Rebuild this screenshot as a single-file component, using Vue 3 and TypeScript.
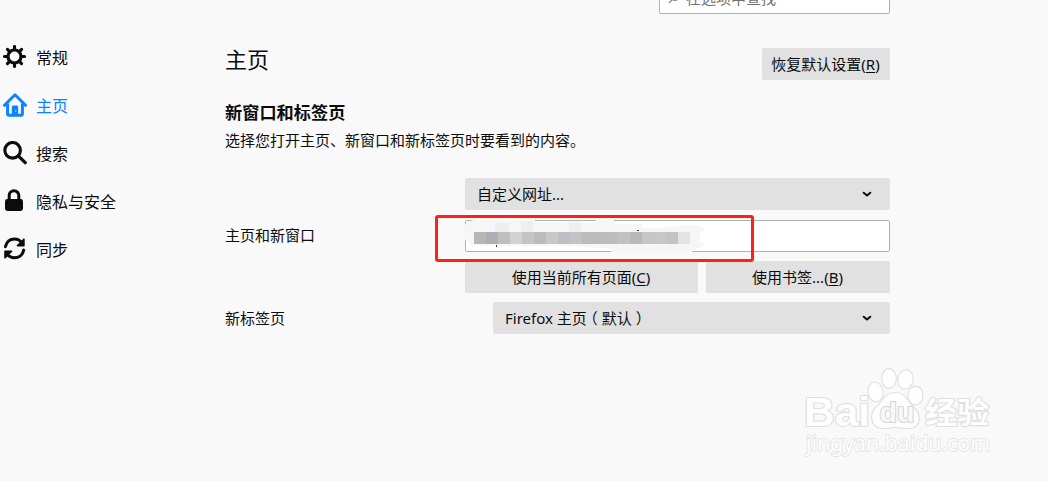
<script setup lang="ts">
interface NavItem {
  id: string
  label: string
}

const navItems: NavItem[] = [
  { id: 'general', label: '常规' },
  { id: 'home', label: '主页' },
  { id: 'search', label: '搜索' },
  { id: 'privacy', label: '隐私与安全' },
  { id: 'sync', label: '同步' },
]
const active = 'home'

const mosaic: string[] = [
  '#b9b7b4', '#abb0b6', '#bfbfc1', '#d2d2d3', '#c4c4c5', '#b9bbbe',
  '#c9c8c3', '#bcc0c4', '#c2c3c6', '#bcbcbd', '#b9bcbd', '#bdbdbf',
  '#c1c1c3', '#b9b8b9', '#c6c6c5', '#c6c7cb', '#c3c3c4', '#e2e3e6',
]
const teeth: number[] = [0, 45, 90, 135, 180, 225, 270, 315]
</script>

<template>
  <div class="page">
    <nav class="nav">
      <a v-for="item in navItems" :key="item.id" class="nav-item" :class="{ active: item.id === active }">
        <svg class="nav-icon" viewBox="0 0 24 24">
          <g v-if="item.id === 'general'" fill="none" stroke="currentColor" stroke-linecap="round">
            <circle cx="11.500" cy="11.500" r="6.500" stroke-width="3.2" />
            <path v-for="a in teeth" :key="a" d="M11.500 4V1.500" stroke-width="3.100" :transform="`rotate(${a} 11.500 11.500)`" />
          </g>
          <g v-else-if="item.id === 'home'" fill="none" stroke="currentColor" stroke-linecap="round" stroke-linejoin="round">
            <path d="M1.5 12.3L12 1.8L22.5 12.3" stroke-width="3" />
            <path d="M4.6 11.5V20.8Q4.6 22.2 6 22.2H18Q19.400 22.2 19.400 20.8V11.5" stroke-width="3" />
            <path d="M8.800 22V14Q8.800 12.500 10.2 12.500H13.8Q15.200 12.500 15.200 14V22Z" fill="currentColor" stroke="none" />
            <path d="M12.7 17.3V18.5" stroke="#8cc5ff" stroke-width="1.2" />
          </g>
          <g v-else-if="item.id === 'search'" fill="none" stroke="currentColor" stroke-linecap="round">
            <circle cx="9.6" cy="9.3" r="7.8" stroke-width="3.1" />
            <path d="M15.3 14.8L22.2 21.7" stroke-width="3.3" />
          </g>
          <g v-else-if="item.id === 'privacy'">
            <rect x="2" y="10" width="18" height="12" rx="2.4" fill="currentColor" />
            <path d="M6.2 12V6.500A4.8 4.8 0 0 1 15.8 6.500V12" fill="none" stroke="currentColor" stroke-width="3" />
          </g>
          <g v-else fill="none" stroke="currentColor" stroke-width="3" stroke-linecap="round">
            <path d="M2.4 9.7C3.6 4.9 7.2 2.1 11.5 2.1C14.7 2.1 17.4 3.7 18.9 6.2" />
            <path d="M20.7 13.1C19.6 17.9 15.9 20.8 11.6 20.8C8.3 20.8 5.6 19.2 4.1 16.7" />
            <path d="M20.9 2.2V8.700H14.4Z" fill="currentColor" stroke-width="1.6" stroke-linejoin="round" />
            <path d="M2 20.8V14.3H8.600Z" fill="currentColor" stroke-width="1.6" stroke-linejoin="round" />
          </g>
        </svg>
        <span>{{ item.label }}</span>
      </a>
    </nav>

    <main class="main">
      <div class="search">
        <svg class="search-icon" viewBox="0 0 12 12">
          <circle cx="7" cy="5" r="3.7" fill="none" stroke="#8a8a8b" />
          <path d="M4.2 7.8L1 11" stroke="#8a8a8b" stroke-width="1.4" />
        </svg>
        <span>在选项中查找</span>
      </div>
      <header class="header">
        <h1>主页</h1>
        <button class="btn reset">恢复默认设置(<u>R</u>)</button>
      </header>
      <h2>新窗口和标签页</h2>
      <p class="desc">选择您打开主页、新窗口和新标签页时要看到的内容。</p>

      <section class="home-row">
        <label class="label raised">主页和新窗口</label>
        <div class="controls">
          <div class="select">
            <span>自定义网址...</span>
            <svg class="chevron" viewBox="0 0 10 7"><path d="M1.7 1.7L5 4.6L8.3 1.7" /></svg>
          </div>
          <div class="url">
            <div class="marker">
              <svg class="smudge" viewBox="0 0 246 32">
                <path d="M3 5Q5 0 15 0H73V2H105V1H119V3H134V0H152V4H180V8Q210 8 218 5Q235 3 243 9L238 14V23H243Q240 29 230 30V32H149V29Q100 24 82 26H39L8 25V21H4Q-2 14 3 5Z" fill="#f6f6f6" />
                <path d="M33 3H47V15H33ZM59 1H71V15H59ZM107 3H119V13H107Z" fill="#eeeeef" />
                <path d="M34.500 25v2M175 10.5h2" stroke="#333" stroke-width="1" />
              </svg>
              <div class="mosaic">
                <i v-for="(c, n) in mosaic" :key="n" :style="{ backgroundColor: c }"></i>
              </div>
            </div>
          </div>
          <div class="buttons">
            <button class="btn current">使用当前所有页面(<u>C</u>)</button>
            <button class="btn bookmark">使用书签...(<u>B</u>)</button>
          </div>
        </div>
      </section>

      <section class="tab-row">
        <label class="label">新标签页</label>
        <div class="select tab-select">
          <span>Firefox 主页<span class="paren">（</span>默认<span class="paren close">）</span></span>
          <svg class="chevron" viewBox="0 0 10 7"><path d="M1.7 1.7L5 4.6L8.3 1.7" /></svg>
        </div>
      </section>
    </main>

    <svg class="watermark" viewBox="0 0 210 105">
      <g fill="#fefefe" stroke="#dfdfdf" stroke-width="2.2" paint-order="stroke" stroke-linejoin="round">
        <text class="logo" x="9" y="66" font-size="40" textLength="66" lengthAdjust="spacingAndGlyphs">Bai</text>
        <ellipse cx="80.500" cy="32" rx="7" ry="9.300" transform="rotate(-8 80.500 32)" />
        <ellipse cx="94" cy="18.500" rx="6.800" ry="9.300" />
        <ellipse cx="110.500" cy="19.500" rx="7" ry="9.300" transform="rotate(12 110.500 19.500)" />
        <ellipse cx="120.500" cy="35.500" rx="7" ry="8.800" />
        <path d="M100 33C90 33 88 42 82 47C75 53 76 64 83 67C89 69.500 94 67 100 67C107 67 113 69.500 119 67C126 63 125 53 118 47C112 41 110 33 100 33Z" />
        <text class="logo du" x="84.500" y="62" font-size="27" textLength="35" lengthAdjust="spacingAndGlyphs">du</text>
        <text class="cn" x="130" y="63" font-size="30" textLength="64" lengthAdjust="spacingAndGlyphs">经验</text>
        <text class="domain" x="11" y="91" font-size="21.500" textLength="184" lengthAdjust="spacingAndGlyphs">jingyan.baidu.com</text>
      </g>
    </svg>
  </div>
</template>

<style>
body {
  margin: 0;
  background: #f9f9fa;
}
</style>

<style scoped>
.page {
  position: relative;
  box-sizing: border-box;
  display: flex;
  width: 1048px;
  height: 481px;
  overflow: hidden;
  background: #f9f9fa;
  color: #0c0c0d;
  font: 15px/20px "Noto Sans", "Noto Sans CJK SC", sans-serif;
}
.nav {
  flex: none;
  width: 225px;
  padding-top: 34px;
}
.nav-item {
  display: flex;
  align-items: center;
  height: 48px;
  padding-left: 3px;
  font-size: 16px;
}
.nav-item.active {
  color: #0a84ff;
}
.nav-icon {
  width: 24px;
  height: 24px;
  margin: -2px 9px 0 0;
}
.main {
  width: 665px;
}
.search {
  box-sizing: border-box;
  display: flex;
  align-items: center;
  width: 231px;
  height: 32px;
  margin: -18px 0 0 434px;
  padding-left: 8px;
  border: 1px solid #b1b1b1;
  border-radius: 2px;
  background: #fff;
  color: #737373;
}
.search-icon {
  width: 12px;
  height: 12px;
  margin-right: 6px;
}
.header {
  display: flex;
  justify-content: space-between;
  height: 32px;
  margin-top: 34px;
}
h1 {
  margin: -5px 0 0;
  font-size: 22px;
  font-weight: 400;
  line-height: 32px;
}
h2 {
  margin: 21px 0 0;
  font-size: 17.2px;
  font-weight: 700;
  line-height: 24px;
}
.desc {
  margin: 5px 0 0;
}
.btn {
  box-sizing: border-box;
  height: 32px;
  padding: 0 1px 0 0;
  border: 0;
  border-radius: 2px;
  background: #e1e1e2;
  color: inherit;
  font: inherit;
  white-space: nowrap;
}
.btn u {
  text-underline-offset: 2px;
}
.reset {
  width: 128px;
}
.home-row {
  display: flex;
  align-items: center;
  margin-top: 28px;
}
.label {
  flex: 1;
}
.raised {
  padding-bottom: 2px;
}
.controls {
  width: 425px;
}
.select {
  box-sizing: border-box;
  display: flex;
  align-items: center;
  justify-content: space-between;
  height: 32px;
  padding: 0 18px 0 12px;
  border-radius: 2px;
  background: #e1e1e2;
}
.paren {
  display: inline-block;
  transform: translateX(-4px);
}
.paren.close {
  transform: translateX(4px);
}
.chevron {
  width: 10px;
  height: 7px;
  fill: none;
  stroke: #0c0c0d;
  stroke-width: 2;
  stroke-linecap: round;
  stroke-linejoin: round;
}
.url {
  position: relative;
  box-sizing: border-box;
  height: 32px;
  margin: 10px 0 9px;
  border: 1px solid #b1b1b1;
  border-radius: 2px;
  background: #fff;
}
.marker {
  position: absolute;
  z-index: 1;
  top: -6px;
  left: -31px;
  box-sizing: border-box;
  width: 319px;
  height: 47px;
  border: 3px solid #fd2117;
  border-radius: 3px;
}
.smudge {
  position: absolute;
  top: 2px;
  left: 24px;
  width: 246px;
  height: 32px;
}
.mosaic {
  position: absolute;
  top: 14px;
  left: 36px;
  display: flex;
}
.mosaic i {
  width: 12px;
  height: 12px;
}
.buttons {
  display: flex;
  gap: 8px;
}
.current {
  width: 233px;
}
.bookmark {
  width: 184px;
}
.tab-row {
  display: flex;
  align-items: center;
  margin-top: 9px;
}
.tab-select {
  width: 397px;
}
.watermark {
  position: absolute;
  top: 360px;
  left: 795px;
  width: 210px;
  height: 105px;
}
.logo {
  font-family: "Liberation Sans", sans-serif;
  font-weight: 700;
}
.du {
  fill: #f8f8f8;
  stroke: #d4d4d4;
  stroke-width: 2;
}
.cn {
  font-family: "Noto Sans CJK SC", sans-serif;
  font-weight: 700;
}
.domain {
  font-family: "Noto Sans", sans-serif;
  stroke: #e4e4e4;
  stroke-width: 1.8;
}
</style>
